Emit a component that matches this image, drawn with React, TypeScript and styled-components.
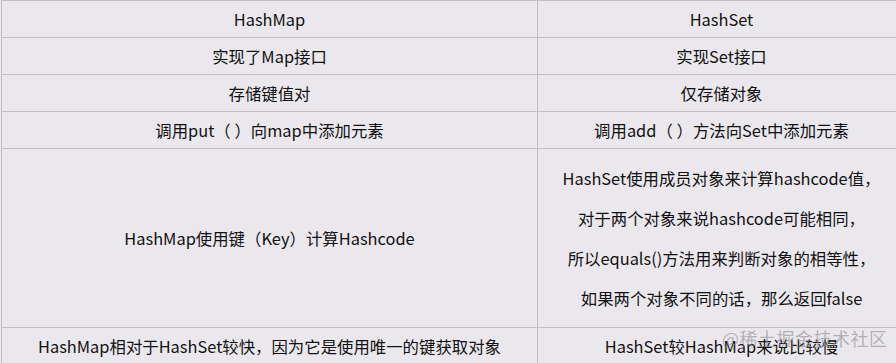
import React from "react";
import styled, { createGlobalStyle } from "styled-components";

const GlobalStyle = createGlobalStyle`
  html, body {
    margin: 0;
    padding: 0;
    background: #ebe8ed;
    overflow: hidden;
  }
`;

type Row = { left: string; right: string | string[]; tall?: boolean };

const rows: Row[] = [
	{ left: "HashMap", right: "HashSet" },
	{ left: "实现了Map接口", right: "实现Set接口" },
	{ left: "存储键值对", right: "仅存储对象" },
	{ left: "调用put（ ）向map中添加元素", right: "调用add（ ）方法向Set中添加元素" },
	{
		left: "HashMap使用键（Key）计算Hashcode",
		right: [
			"HashSet使用成员对象来计算hashcode值，",
			"对于两个对象来说hashcode可能相同，",
			"所以equals()方法用来判断对象的相等性，",
			"如果两个对象不同的话，那么返回false",
		],
		tall: true,
	},
	{ left: "HashMap相对于HashSet较快，因为它是使用唯一的键获取对象", right: "HashSet较HashMap来说比较慢" },
];

export default function App() {
	return (
		<Page>
			<GlobalStyle />
			<Table>
				<colgroup>
					<col style={{ width: 536 }} />
					<col />
				</colgroup>
				<tbody>
					{rows.map((row, i) => (
						<tr key={i}>
							<Cell $tall={row.tall}>{row.left}</Cell>
							<Cell $tall={row.tall}>
								{Array.isArray(row.right)
									? row.right.map((line, j) => <Line key={j}>{line}</Line>)
									: row.right}
							</Cell>
						</tr>
					))}
				</tbody>
			</Table>
			<Watermark>@稀土掘金技术社区</Watermark>
		</Page>
	);
}

const Page = styled.div`
	position: relative;
	width: 896px;
	height: 363px;
	overflow: hidden;
	padding-left: 1px;
	box-sizing: border-box;
`;

const Table = styled.table`
	width: 905px;
	table-layout: fixed;
	border-collapse: collapse;
	font-family: "Noto Sans CJK SC", sans-serif;
	font-size: 16.4px;
	color: #111;
`;

const Cell = styled.td<{ $tall?: boolean }>`
	border: 1px solid #c2bec4;
	height: ${({ $tall }) => ($tall ? "179px" : "37px")};
	padding: 0;
	text-align: center;
	vertical-align: middle;
	box-sizing: border-box;
	white-space: nowrap;
`;

const Line = styled.div`
	line-height: 40px;
`;

const Watermark = styled.div`
	position: absolute;
	left: 722px;
	top: 325px;
	font-family: "Noto Sans CJK SC", sans-serif;
	font-size: 18px;
	color: rgba(140, 138, 144, 0.6);
	letter-spacing: 0.5px;
	pointer-events: none;
`;
